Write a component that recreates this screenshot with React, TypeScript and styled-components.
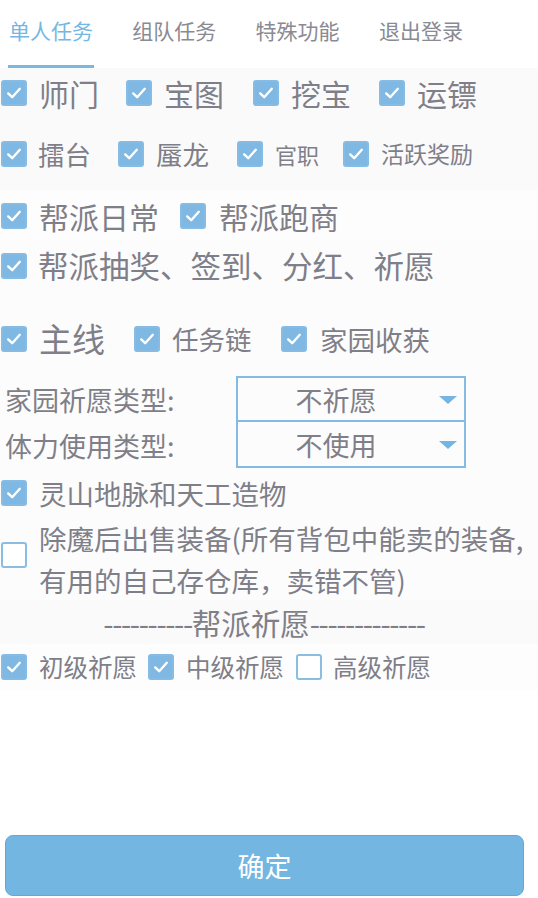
import React from "react";
import styled, { createGlobalStyle } from "styled-components";

const Global = createGlobalStyle`
  html, body { margin: 0; padding: 0; background: #ffffff; }
  body { font-family: "Noto Sans CJK SC", "Noto Sans", sans-serif; }
  * { box-sizing: border-box; }
`;

const Page = styled.div`
  width: 538px;
  height: 898px;
  display: flex;
  flex-direction: column;
  background: #ffffff;
  color: #7f7f89;
  overflow: hidden;
`;

const Tabs = styled.div`
  display: flex;
  height: 68px;
  padding-left: 8px;
  background: #ffffff;
`;

const Tab = styled.div<{ $active?: boolean }>`
  height: 68px;
  width: 86px;
  flex: none;
  display: flex;
  align-items: center;
  justify-content: center;
  padding-bottom: 5px;
  margin-right: 37.3px;
  font-size: 21px;
  white-space: nowrap;
  color: ${(p) => (p.$active ? "#74b7e3" : "#8a8a93")};
  border-bottom: 3px solid ${(p) => (p.$active ? "#7ab8e1" : "transparent")};
`;

const Content = styled.div`
  flex: 1;
  display: flex;
  flex-direction: column;
  background: #fcfcfc;
`;

const Row = styled.div<{ $h: number; $pt?: number; $bg?: string }>`
  display: flex;
  align-items: center;
  height: ${(p) => p.$h}px;
  padding-top: ${(p) => p.$pt ?? 0}px;
  background: ${(p) => p.$bg ?? "transparent"};
`;

const Item = styled.div<{ $w?: number }>`
  display: flex;
  align-items: center;
  flex: none;
  ${(p) => (p.$w ? `width: ${p.$w}px;` : "")}
`;

const Box = styled.span<{ $on?: boolean; $mb?: number }>`
  flex: none;
  width: 26px;
  height: 26px;
  margin-left: 1px;
  margin-bottom: ${(p) => p.$mb ?? 0}px;
  border-radius: 3px;
  display: flex;
  align-items: center;
  justify-content: center;
  background: ${(p) => (p.$on ? "#7fb8e2" : "#ffffff")};
  border: 2px solid ${(p) => (p.$on ? "#86bce4" : "#8bbde3")};
`;

const Label = styled.span<{ $size: number; $ml?: number }>`
  font-size: ${(p) => p.$size}px;
  margin-left: ${(p) => p.$ml ?? 12}px;
  line-height: 1.2;
  white-space: nowrap;
  color: #7f7f89;
`;

const Check = ({ on, mb }: { on: boolean; mb?: number }) => (
  <Box $on={on} $mb={mb}>
    {on && (
      <svg width="18" height="18" viewBox="0 0 18 18">
        <path d="M3.2 9.4 L7.2 13.2 L14.8 4.8" fill="none" stroke="#ffffff" strokeWidth="2.4" strokeLinecap="round" strokeLinejoin="round" />
      </svg>
    )}
  </Box>
);

const Opt = ({ on = true, label, size, ml, w }: { on?: boolean; label: string; size: number; ml?: number; w?: number }) => (
  <Item $w={w}>
    <Check on={on} />
    <Label $size={size} $ml={ml}>{label}</Label>
  </Item>
);

const SelectBlock = styled.div`
  display: flex;
  flex-direction: column;
`;

const SelectRow = styled.div`
  display: flex;
  align-items: center;
  height: 46px;
`;

const SelLabel = styled.div`
  width: 236px;
  padding-left: 5px;
  padding-top: 1px;
  font-size: 27px;
  color: #7f7f89;
  white-space: nowrap;
`;

const SelBox = styled.div<{ $first?: boolean }>`
  position: relative;
  width: 230px;
  height: 100%;
  border: 2px solid #84bbe3;
  ${(p) => (p.$first ? "" : "border-top: none;")}
  display: flex;
  align-items: center;
  justify-content: center;
  padding-right: 30px;
  font-size: 27px;
  color: #7f7f89;
`;

const Arrow = styled.span`
  position: absolute;
  right: 7px;
  top: 50%;
  margin-top: -3px;
  width: 0;
  height: 0;
  border-left: 9px solid transparent;
  border-right: 9px solid transparent;
  border-top: 8px solid #76b5e2;
`;

const MultiRow = styled.div`
  display: flex;
  align-items: center;
  height: 82px;
`;

const MultiText = styled.div`
  margin-left: 12px;
  font-size: 27.5px;
  line-height: 42px;
  color: #7f7f89;
  white-space: nowrap;
`;

const Divider = styled.div`
  height: 44px;
  display: flex;
  align-items: center;
  justify-content: center;
  font-size: 29.5px;
  color: #7f7f89;
  background: #fafafa;
  padding-right: 10px;
  white-space: nowrap;
`;

const Dashes = styled.span`
  letter-spacing: -1.4px;
`;

const Spacer = styled.div`
  flex: 1;
  background: #ffffff;
`;

const Footer = styled.div`
  padding: 0 14px 2px 5px;
  background: #ffffff;
`;

const Button = styled.button`
  width: 100%;
  height: 61px;
  border-radius: 8px;
  border: 1px solid #5ea8e2;
  background: #73b6e2;
  color: #ffffff;
  font-family: "Noto Sans CJK SC", "Noto Sans", sans-serif;
  font-size: 27px;
  display: flex;
  align-items: center;
  justify-content: center;
  padding: 0;
`;

export default function App() {
  return (
    <Page>
      <Global />
      <Tabs>
        <Tab $active>单人任务</Tab>
        <Tab>组队任务</Tab>
        <Tab>特殊功能</Tab>
        <Tab>退出登录</Tab>
      </Tabs>
      <Content>
        <Row $h={50} $bg="#fafafa">
          <Opt label="师门" size={30} w={125} />
          <Opt label="宝图" size={30} w={127} />
          <Opt label="挖宝" size={30} w={126} />
          <Opt label="运镖" size={30} />
        </Row>
        <Row $h={72} $bg="#fafafa">
          <Opt label="擂台" size={26.5} ml={11} w={117} />
          <Opt label="蜃龙" size={26.5} ml={12} w={119} />
          <Opt label="官职" size={22} ml={12} w={106} />
          <Opt label="活跃奖励" size={23} ml={12} />
        </Row>
        <Row $h={51} $bg="#fdfdfd">
          <Opt label="帮派日常" size={30} ml={12} w={179} />
          <Opt label="帮派跑商" size={30} ml={13} />
        </Row>
        <Row $h={49}>
          <Opt label="帮派抽奖、签到、分红、祈愿" size={30.5} ml={11} />
        </Row>
        <Row $h={86} $pt={12}>
          <Opt label="主线" size={33} ml={12} w={133} />
          <Opt label="任务链" size={26.5} ml={12} w={147} />
          <Opt label="家园收获" size={27.5} ml={13} />
        </Row>
        <SelectBlock>
          <SelectRow>
            <SelLabel>家园祈愿类型:</SelLabel>
            <SelBox $first>
              不祈愿
              <Arrow />
            </SelBox>
          </SelectRow>
          <SelectRow>
            <SelLabel>体力使用类型:</SelLabel>
            <SelBox>
              不使用
              <Arrow />
            </SelBox>
          </SelectRow>
        </SelectBlock>
        <Row $h={50}>
          <Opt label="灵山地脉和天工造物" size={27.5} ml={12} />
        </Row>
        <MultiRow>
          <Check on={false} mb={8} />
          <MultiText>
            除魔后出售装备(所有背包中能卖的装备,
            <br />
            有用的自己存仓库，卖错不管)
          </MultiText>
        </MultiRow>
        <Divider>
          <Dashes>----------</Dashes>帮派祈愿<Dashes>-------------</Dashes>
        </Divider>
        <Row $h={46} $bg="#fdfdfd">
          <Opt label="初级祈愿" size={24.5} ml={12} w={147} />
          <Opt label="中级祈愿" size={24.5} ml={12} w={148} />
          <Opt on={false} label="高级祈愿" size={24.5} ml={11} />
        </Row>
        <Spacer />
        <Footer>
          <Button>确定</Button>
        </Footer>
      </Content>
    </Page>
  );
}
